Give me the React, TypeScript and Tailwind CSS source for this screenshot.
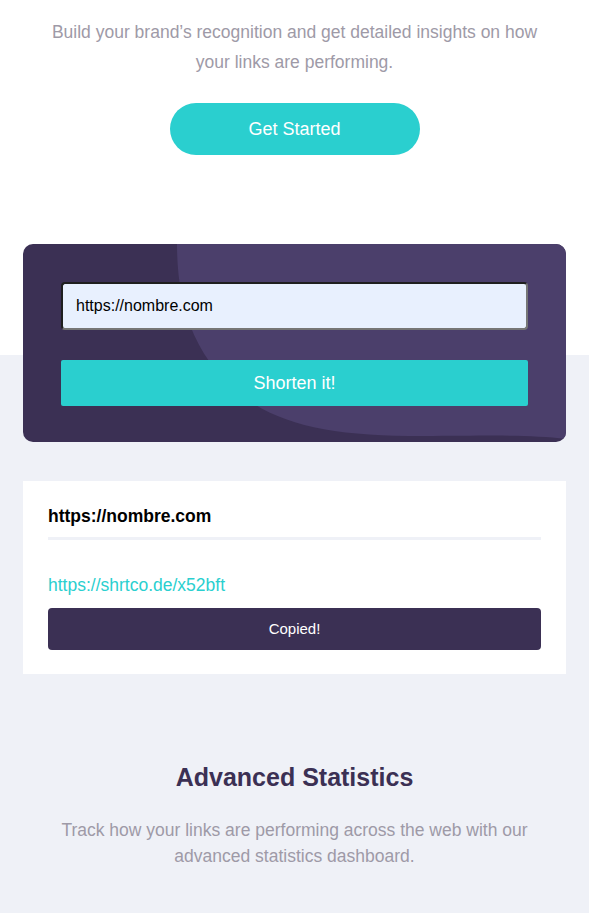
import React from "react";

const font = { fontFamily: '"Liberation Sans", Arial, sans-serif' };

const App: React.FC = () => (
  <div className="w-full min-h-[913px] bg-[#eff1f7]" style={font}>
    {/* Hero tail */}
    <section className="bg-white flex flex-col items-center pt-[17px] pb-[200px]">
      <p className="text-[17.5px] leading-[30px] text-[#9e9aa7] text-center px-[44px]">
        Build your brand’s recognition and get detailed insights on how your links are performing.
      </p>
      <button className="mt-[26px] w-[250px] h-[52px] rounded-full bg-[#2acfcf] text-white text-[18px]">
        Get Started
      </button>
    </section>

    {/* Shortener */}
    <section className="px-[23px] -mt-[111px]">
      <div className="relative overflow-hidden rounded-[10px] bg-[#3b3054] px-[38px] pt-[38px] pb-[36px]">
        <svg
          className="absolute inset-0 w-full h-full"
          viewBox="0 0 543 198"
          preserveAspectRatio="none"
        >
          <path
            d="M154,0 C154,60 170,118 228,158 C268,184 320,192 400,192 C460,192 505,190 543,195 L543,0 Z"
            fill="#4b3f6b"
          />
        </svg>
        <div className="relative flex flex-col gap-[30px]">
          <div className="h-[48px] rounded-[4px] bg-[#e8f0fe] border-2 border-t-[#1f1f1f] border-l-[#1f1f1f] border-b-[#767676] border-r-[#767676] flex items-center px-[13px] text-[16px] text-black">
            https://nombre.com
          </div>
          <button className="h-[46px] rounded-[2px] bg-[#2acfcf] text-white text-[18px]">
            Shorten it!
          </button>
        </div>
      </div>

      {/* Result */}
      <div className="mt-[39px] bg-white px-[25px] pt-[24px] pb-[24px]">
        <div className="text-[17.5px] font-bold text-black leading-[22px]">https://nombre.com</div>
        <div className="mt-[10px] h-[3px] bg-[#eff1f7]" />
        <div className="mt-[34px] text-[17.5px] leading-[22px] text-[#2acfcf]">https://shrtco.de/x52bft</div>
        <button className="mt-[12px] w-full h-[42px] rounded-[4px] bg-[#3b3054] text-white text-[15px]">
          Copied!
        </button>
      </div>
    </section>

    {/* Statistics */}
    <section className="flex flex-col items-center pt-[88px] pb-[40px] px-[50px]">
      <h2 className="text-[25px] font-bold text-[#3b3054] leading-[30px]">Advanced Statistics</h2>
      <p className="mt-[25px] text-[17.5px] leading-[26px] text-[#9e9aa7] text-center px-[6px]">
        Track how your links are performing across the web with our advanced statistics dashboard.
      </p>
    </section>
  </div>
);

export default App;
